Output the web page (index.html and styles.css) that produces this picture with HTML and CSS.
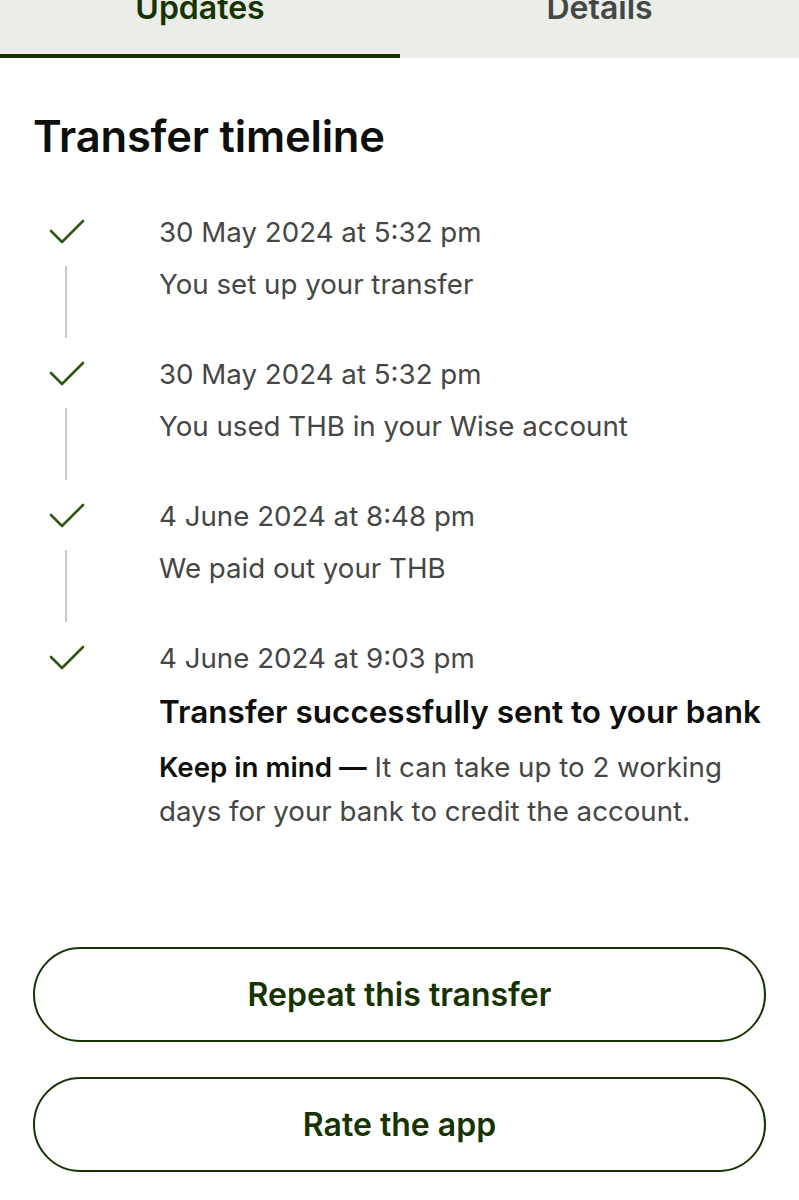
FILE: index.html
```html
<!DOCTYPE html>
<html lang="en">
<head>
<meta charset="utf-8">
<title>Transfer timeline</title>
<link rel="stylesheet" href="styles.css">
</head>
<body>
<nav class="tabs">
  <div class="tab tab-active"><span class="tab-label">Updates</span></div>
  <div class="tab"><span class="tab-label">Details</span></div>
</nav>
<main class="page">
  <h1 class="title">Transfer timeline</h1>
  <ol class="timeline">
    <li class="item">
      <div class="rail">
        <svg class="check" viewBox="0 0 36 36" width="36" height="36"><path d="M2 17 L13 28 L34 7" fill="none" stroke="#2f5711" stroke-width="2.6" stroke-linecap="round" stroke-linejoin="round"/></svg>
        <span class="line"></span>
      </div>
      <div class="body">
        <div class="date">30 May 2024 at 5:32 pm</div>
        <div class="desc">You set up your transfer</div>
      </div>
    </li>
    <li class="item">
      <div class="rail">
        <svg class="check" viewBox="0 0 36 36" width="36" height="36"><path d="M2 17 L13 28 L34 7" fill="none" stroke="#2f5711" stroke-width="2.6" stroke-linecap="round" stroke-linejoin="round"/></svg>
        <span class="line"></span>
      </div>
      <div class="body">
        <div class="date">30 May 2024 at 5:32 pm</div>
        <div class="desc">You used THB in your Wise account</div>
      </div>
    </li>
    <li class="item">
      <div class="rail">
        <svg class="check" viewBox="0 0 36 36" width="36" height="36"><path d="M2 17 L13 28 L34 7" fill="none" stroke="#2f5711" stroke-width="2.6" stroke-linecap="round" stroke-linejoin="round"/></svg>
        <span class="line"></span>
      </div>
      <div class="body">
        <div class="date">4 June 2024 at 8:48 pm</div>
        <div class="desc">We paid out your THB</div>
      </div>
    </li>
    <li class="item item-last">
      <div class="rail">
        <svg class="check" viewBox="0 0 36 36" width="36" height="36"><path d="M2 17 L13 28 L34 7" fill="none" stroke="#2f5711" stroke-width="2.6" stroke-linecap="round" stroke-linejoin="round"/></svg>
      </div>
      <div class="body">
        <div class="date">4 June 2024 at 9:03 pm</div>
        <div class="headline">Transfer successfully sent to your bank</div>
        <p class="note"><strong>Keep in mind —</strong> It can take up to 2 working days for your bank to credit the account.</p>
      </div>
    </li>
  </ol>
  <div class="actions">
    <button class="btn">Repeat this transfer</button>
    <button class="btn">Rate the app</button>
  </div>
</main>
</body>
</html>
```

FILE: styles.css
```css
* { box-sizing: border-box; }
html, body { margin: 0; padding: 0; background: #ffffff; }
body {
  font-family: Inter, "Noto Sans", "Liberation Sans", sans-serif;
  color: #0e0f0c;
  width: 799px;
  overflow: hidden;
}

.tabs {
  display: flex;
  height: 58px;
  background: #ebede9;
  overflow: hidden;
}
.tab {
  flex: 0 0 400px;
  display: flex;
  justify-content: center;
  align-items: flex-start;
  border-bottom: 4px solid transparent;
}
.tab + .tab { flex: 1 1 auto; }
.tab-active { border-bottom-color: #163300; }
.tab-label {
  margin-top: -11px;
  font-size: 32px;
  line-height: 38px;
  font-weight: 600;
  color: #454745;
}
.tab-active .tab-label { color: #163300; }

.page { padding: 0 33px; }

.title {
  margin: 52px 0 52px 0;
  font-size: 43.5px;
  line-height: 52px;
  font-weight: 600;
  letter-spacing: -0.2px;
  color: #0e0f0c;
}

.timeline { list-style: none; margin: 0; padding: 0; }
.item {
  display: grid;
  grid-template-columns: 126px 1fr;
  padding-bottom: 18px;
}
.item-last { padding-bottom: 0; }
.rail {
  display: flex;
  flex-direction: column;
  align-items: flex-start;
}
.check { display: block; margin-left: 16px; }
.line {
  display: block;
  width: 1.5px;
  height: 72px;
  margin: 16px 0 0 32px;
  background: #c9cbc6;
}
.date, .desc {
  font-size: 27.7px;
  line-height: 36px;
  color: #454745;
}
.desc { margin-top: 16px; }
.headline {
  margin-top: 18px;
  font-size: 31.5px;
  line-height: 36px;
  font-weight: 600;
  color: #0e0f0c;
  white-space: nowrap;
}
.note {
  margin: 15px 0 0;
  font-size: 27.7px;
  line-height: 44px;
  color: #454745;
}
.note strong { font-weight: 600; color: #0e0f0c; }

.actions {
  display: flex;
  flex-direction: column;
  gap: 35px;
  margin-top: 114px;
}
.btn {
  height: 95px;
  width: 100%;
  border: 2px solid #163300;
  border-radius: 48px;
  background: #ffffff;
  font-family: inherit;
  font-size: 32px;
  font-weight: 600;
  color: #163300;
}
```
